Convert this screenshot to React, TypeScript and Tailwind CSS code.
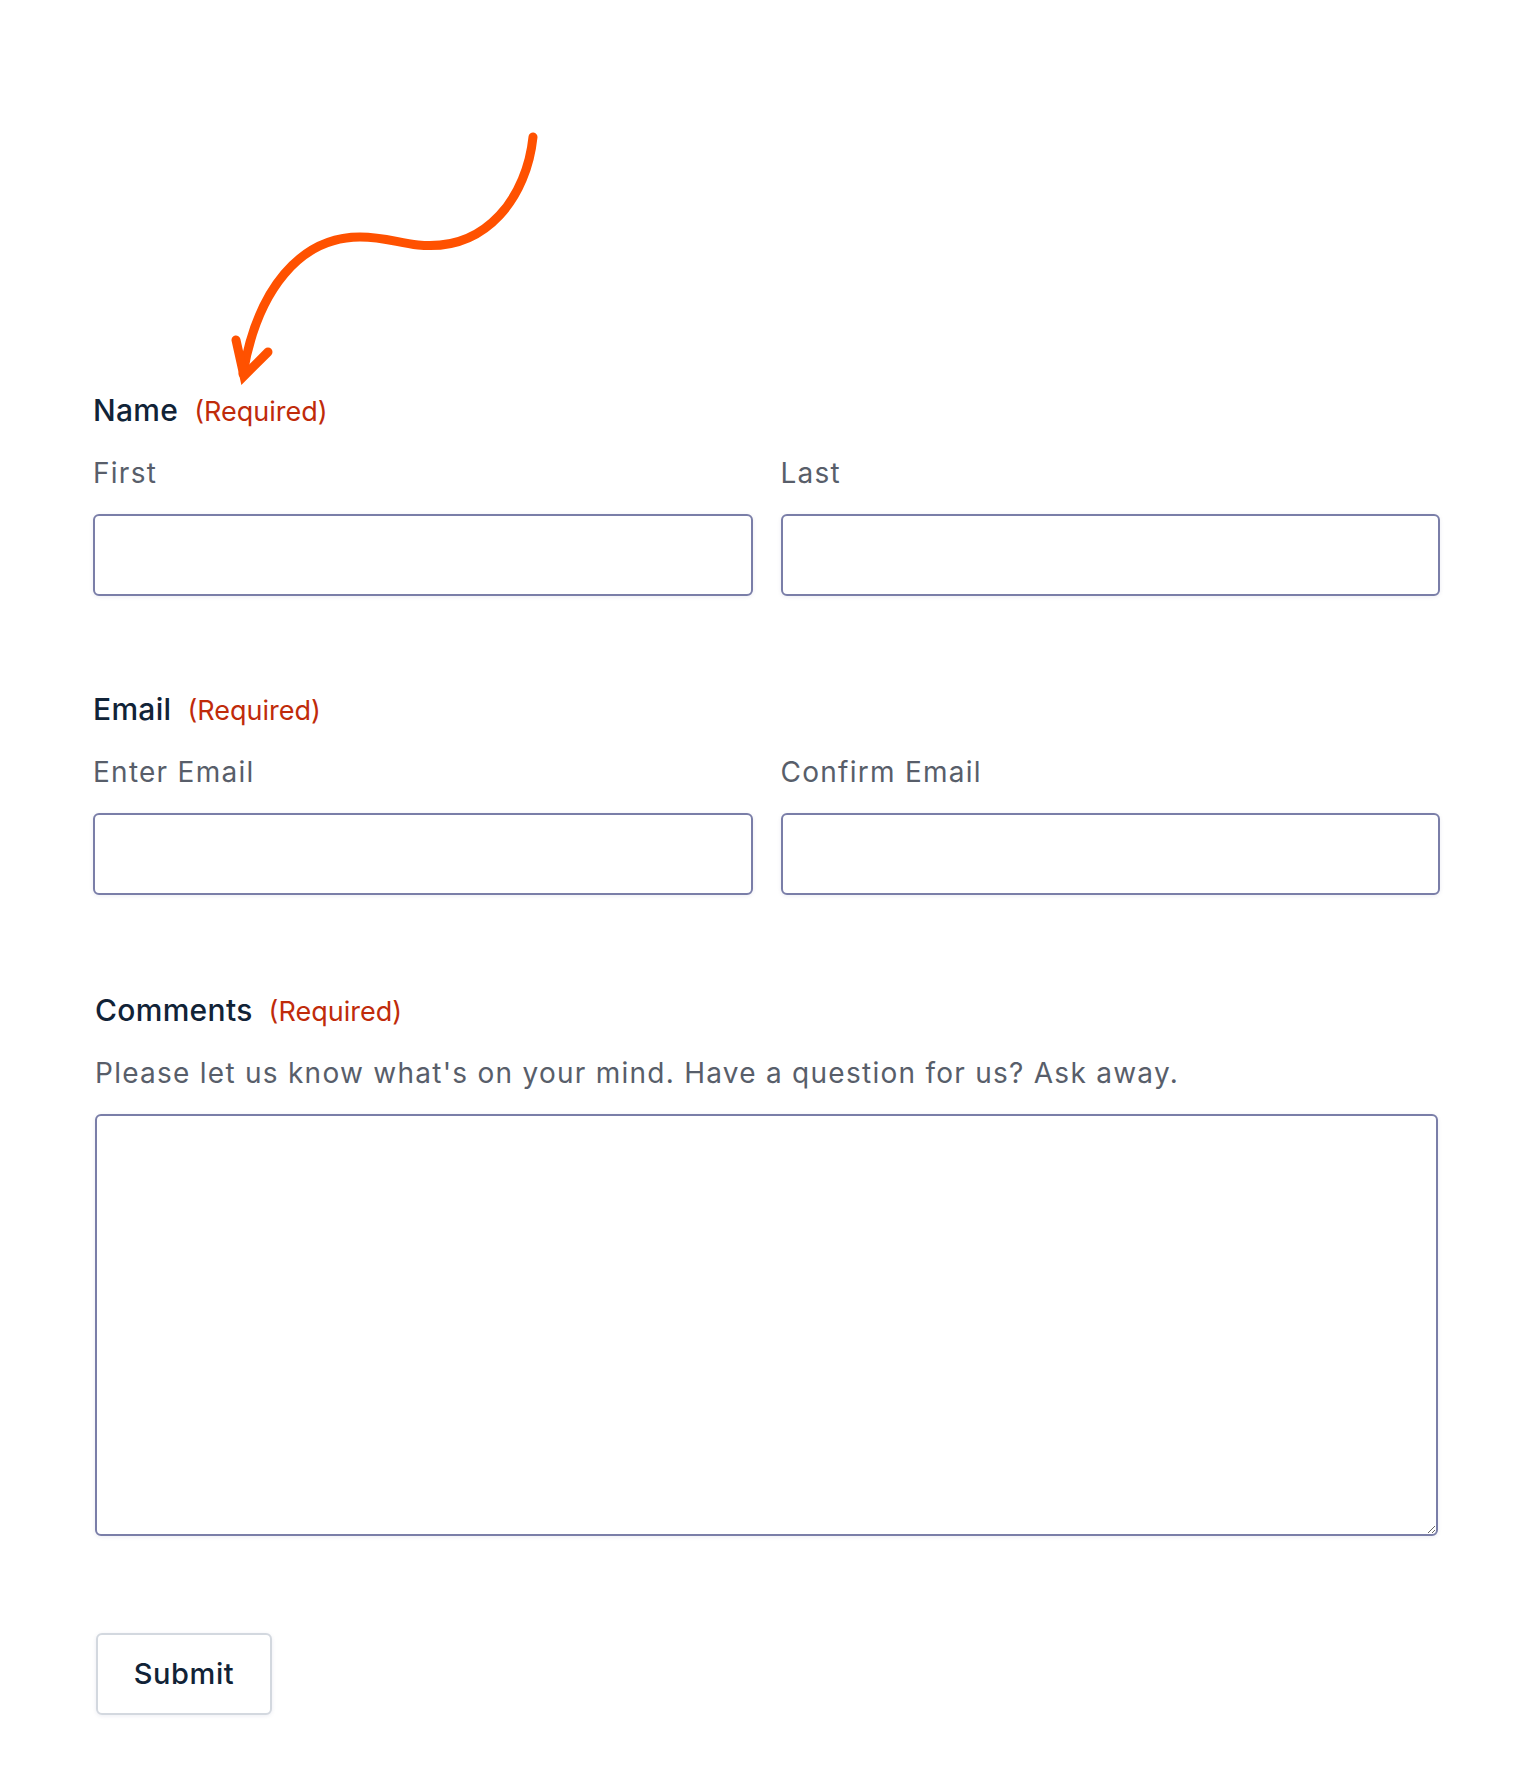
export default function App() {
  const label = 'text-[30px] leading-[36px] font-medium tracking-[0.01em] text-[#112337]'
  const required = 'text-[27px] leading-[36px] font-normal text-[#c02b0a]'
  const sub = 'text-[28px] leading-[32px] tracking-[0.045em] text-[#585e6a]'
  const input =
    'block w-full h-[82px] mt-[25px] rounded-[6px] border-2 border-[#7a7ea8] bg-white shadow-[0_1px_4px_rgba(18,25,97,0.08)] px-4 text-[27px] outline-none'

  return (
    <div className="relative min-h-screen bg-white font-['Inter','Liberation_Sans',sans-serif]">
      {/* hand-drawn arrow pointing at the Name field */}
      <svg
        className="absolute left-0 top-0 pointer-events-none"
        width="600"
        height="420"
        viewBox="0 0 600 420"
        fill="none"
      >
        <path
          d="M533 137 C527 195 488 252 418 245 C398 243 385 237 360 237 C300 237 257 290 243 374"
          stroke="#ff5100"
          strokeWidth="9"
          strokeLinecap="round"
        />
        <path
          d="M236 340 L244 376 L268 352"
          stroke="#ff5100"
          strokeWidth="9"
          strokeLinecap="round"
          strokeLinejoin="miter"
        />
      </svg>

      <form className="ml-[93px] w-[1347px] pt-[392px] pb-[65px]" onSubmit={(e) => e.preventDefault()}>
        {/* Name */}
        <div className="flex items-baseline gap-[16px]">
          <span className={label}>Name</span>
          <span className={required}>(Required)</span>
        </div>
        <div className="mt-[27px] grid grid-cols-2 gap-x-[28px]">
          <div>
            <div className={sub}>First</div>
            <input type="text" className={input} />
          </div>
          <div>
            <div className={sub}>Last</div>
            <input type="text" className={input} />
          </div>
        </div>

        {/* Email */}
        <div className="mt-[95px] flex items-baseline gap-[16px]">
          <span className={label}>Email</span>
          <span className={required}>(Required)</span>
        </div>
        <div className="mt-[27px] grid grid-cols-2 gap-x-[28px]">
          <div>
            <div className={sub}>Enter Email</div>
            <input type="email" className={input} />
          </div>
          <div>
            <div className={sub}>Confirm Email</div>
            <input type="email" className={input} />
          </div>
        </div>

        {/* Comments */}
        <div className="ml-[2px] w-[1343px]">
          <div className="mt-[97px] flex items-baseline gap-[16px]">
            <span className={label}>Comments</span>
            <span className={required}>(Required)</span>
          </div>
          <div className={`mt-[27px] ${sub}`}>
            Please let us know what's on your mind. Have a question for us? Ask away.
          </div>
          <textarea className="block w-full h-[422px] mt-[25px] rounded-[6px] border-2 border-[#7a7ea8] bg-white shadow-[0_1px_4px_rgba(18,25,97,0.08)] p-4 text-[27px] outline-none resize-y" />
        </div>

        {/* Submit */}
        <button
          type="submit"
          className="mt-[97px] ml-[3px] w-[176px] h-[82px] rounded-[6px] border-2 border-[#d3d8df] bg-white shadow-[0_1px_4px_rgba(18,25,97,0.08)] text-[29px] font-medium tracking-[0.02em] text-[#112337]"
        >
          Submit
        </button>
      </form>
    </div>
  )
}
